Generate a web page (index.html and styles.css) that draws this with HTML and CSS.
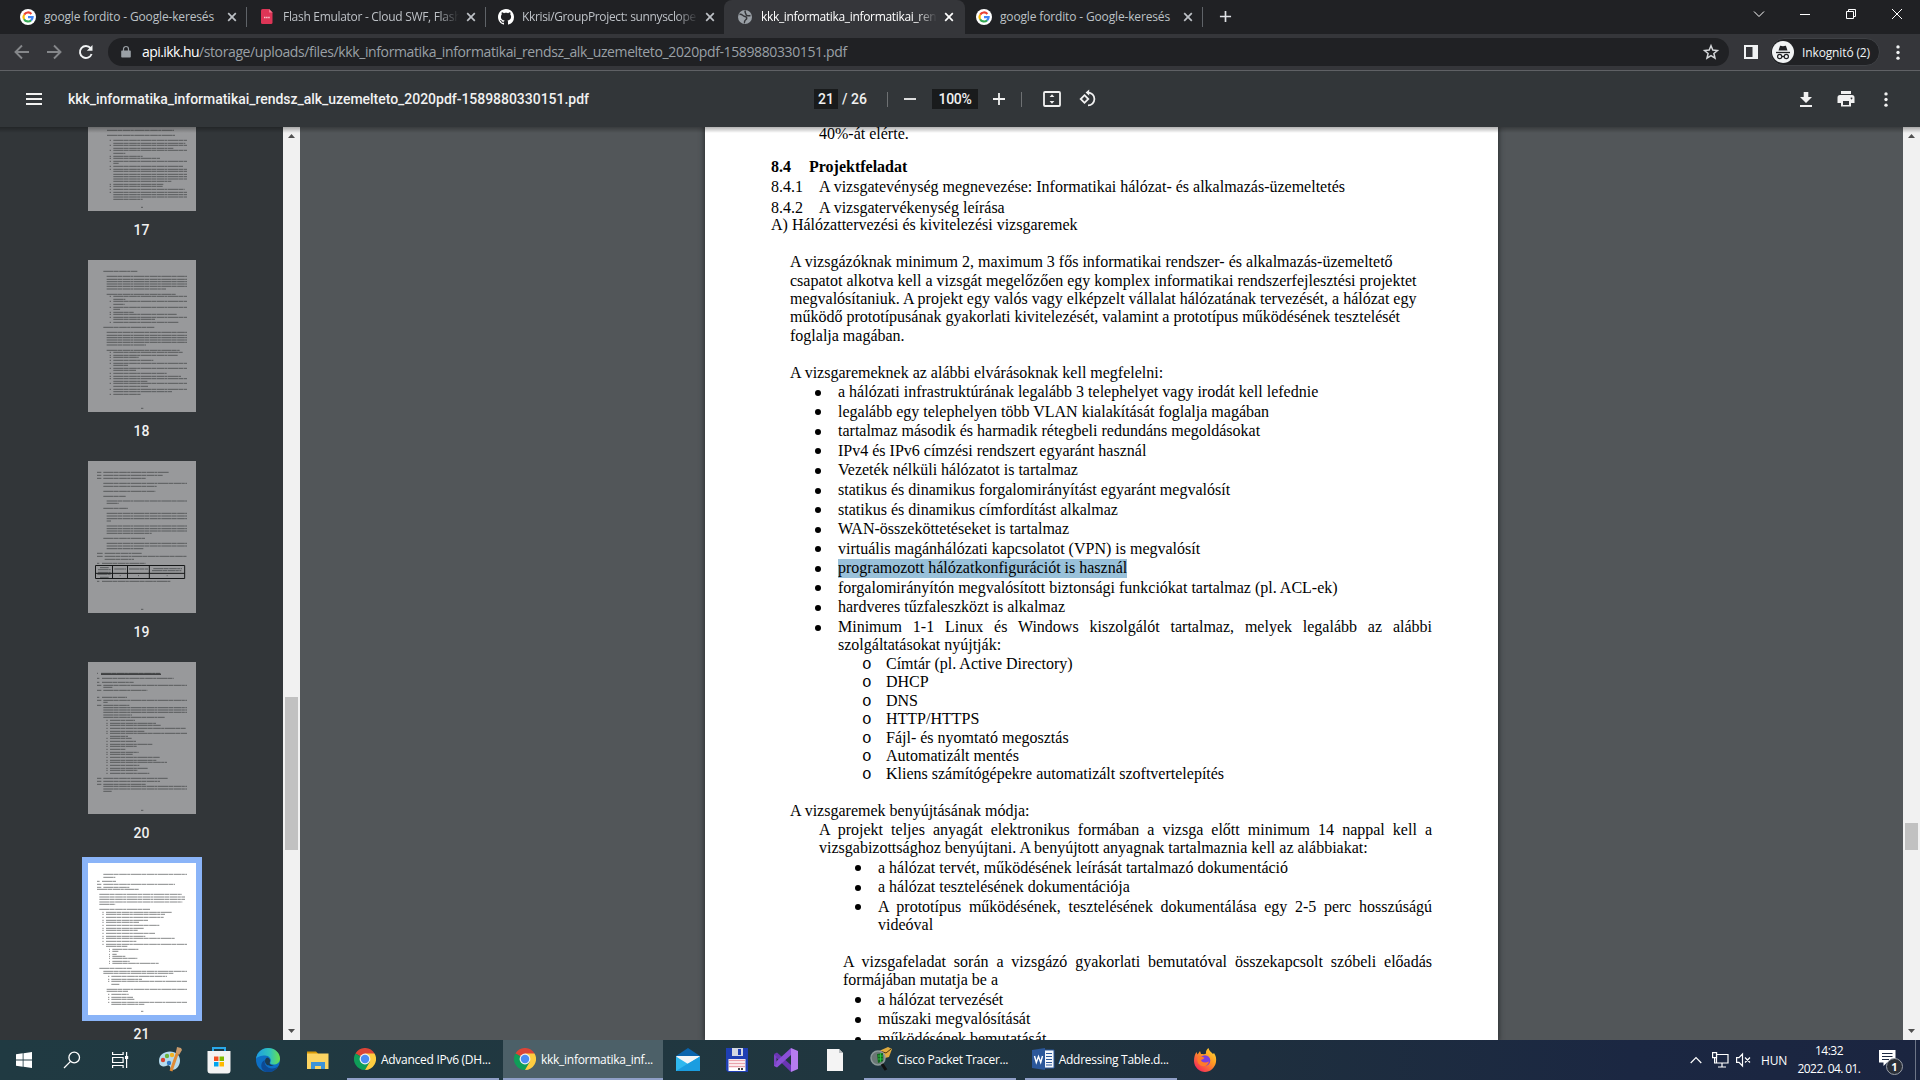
FILE: index.html
```html
<!DOCTYPE html>
<html lang="hu">
<head>
<meta charset="utf-8">
<title>kkk_informatika_informatikai_rendsz_alk_uzemelteto_2020pdf-1589880330151.pdf</title>
<link rel="stylesheet" href="styles.css">
</head>
<body>
<svg class="defs" aria-hidden="true">
  <symbol id="google" viewBox="0 0 16 16"><circle cx="8" cy="8" r="8" fill="#fff"/><g fill="none" stroke-width="2.2"><path d="M4.2 5.6A4.6 4.6 0 0 1 11.4 4.9" stroke="#ea4335"/><path d="M4.1 10.3A4.6 4.6 0 0 1 4.1 5.7" stroke="#fbbc05"/><path d="M11.2 11.3A4.6 4.6 0 0 1 4.1 10.2" stroke="#34a853"/><path d="M8 8.2H12.6A4.6 4.6 0 0 1 11.1 11.4" stroke="#4285f4"/></g></symbol>
  <symbol id="x" viewBox="0 0 10 10"><path d="M1.2 1.2 8.8 8.8M8.8 1.2 1.2 8.8" stroke="currentColor" stroke-width="1.7" fill="none"/></symbol>
  <symbol id="chrome" viewBox="0 0 24 24"><path d="M12 12 1.6 6A12 12 0 0 1 22.4 6z" fill="#db4437"/><path d="M12 12 1.6 6A12 12 0 0 0 12 24L17.2 15z" fill="#0f9d58"/><path d="M12 6H22.4A12 12 0 0 1 12 24L17.2 15z" fill="#ffcd40"/><circle cx="12" cy="12" r="5.9" fill="#f1f1f1"/><circle cx="12" cy="12" r="4.6" fill="#4c8bf5"/></symbol>
  <symbol id="dots" viewBox="0 0 4 16"><g fill="currentColor"><circle cx="2" cy="2" r="1.8"/><circle cx="2" cy="8" r="1.8"/><circle cx="2" cy="14" r="1.8"/></g></symbol>
</svg>

<div class="tabs">
  <div class="tab"><svg class="fav"><use href="#google"/></svg><span class="tt">google fordito - Google-keresés</span><svg class="x"><use href="#x"/></svg></div>
  <div class="tab"><svg class="fav" viewBox="0 0 16 16"><path d="M3.5 0H10l3.500 3.500V13.500A1.500 1.500 0 0 1 12 15H3.500A1.500 1.500 0 0 1 2 13.500V1.500A1.500 1.500 0 0 1 3.500 0z" fill="#dd3556"/><path d="M10 0l3.500 3.500H10z" fill="#f27a90"/><path d="M5 8.500h6" stroke="#f6c4cd" stroke-width="1.500" stroke-dasharray="1.500 .6"/></svg><span class="tt fade">Flash Emulator - Cloud SWF, Flash</span><svg class="x"><use href="#x"/></svg></div>
  <div class="tab nosep"><svg class="fav" viewBox="0 0 16 16"><path fill="#fff" d="M8 0C3.580 0 0 3.580 0 8c0 3.540 2.290 6.530 5.470 7.590.4.070.550-.170.550-.380 0-.190-.010-.820-.010-1.490-2.010.370-2.530-.490-2.690-.940-.090-.230-.480-.940-.820-1.130-.280-.150-.680-.520-.010-.530.630-.010 1.080.580 1.230.820.720 1.210 1.870.870 2.330.660.070-.520.280-.870.510-1.070-1.780-.200-3.640-.890-3.640-3.950 0-.870.310-1.590.820-2.150-.080-.200-.360-1.020.080-2.120 0 0 .670-.210 2.200.820.640-.180 1.320-.270 2-.270s1.360.090 2 .270c1.530-1.040 2.200-.820 2.200-.820.440 1.100.160 1.920.080 2.120.510.560.820 1.270.820 2.150 0 3.070-1.870 3.750-3.650 3.950.290.250.540.730.540 1.480 0 1.070-.010 1.930-.010 2.200 0 .210.150.460.550.380A8.010 8.010 0 0 0 16 8c0-4.420-3.580-8-8-8z"/></svg><span class="tt fade gh">Kkrisi/GroupProject: sunnysclope</span><svg class="x"><use href="#x"/></svg></div>
  <div class="tab active"><svg class="fav" viewBox="0 0 16 16"><circle cx="8" cy="8" r="7" fill="#9aa0a6"/><path d="M2.500 5.500C5 4.500 5.500 7 8 7.500s2 2.500.5 3.500-.5 2.500-1.500 3M8.500 1.500C7 3.500 9 4 9 5.500s3 1.500 4.500 1" fill="none" stroke="#35363a" stroke-width="1.500"/></svg><span class="tt fade kk">kkk_informatika_informatikai_rend</span><svg class="x"><use href="#x"/></svg></div>
  <div class="tab"><svg class="fav"><use href="#google"/></svg><span class="tt">google fordito - Google-keresés</span><svg class="x"><use href="#x"/></svg></div>
  <svg class="plus" viewBox="0 0 14 14"><path d="M7 1v12M1 7h12" stroke="#dfe1e5" stroke-width="1.800"/></svg>
  <div class="win">
    <svg viewBox="0 0 46 28"><path d="M18 11.500l5 5 5-5" /></svg>
    <svg viewBox="0 0 46 28"><path d="M18 14.500h10"/></svg>
    <svg viewBox="0 0 46 28"><path d="M18.500 11.500h7v7h-7zM20.500 11.500v-2h7v7h-2"/></svg>
    <svg viewBox="0 0 46 28"><path d="M18 9l10 10M28 9l-10 10"/></svg>
  </div>
</div>

<div class="nav">
  <svg class="nb dim" viewBox="0 0 16 16"><path d="M15 8H2M8 1.500 1.500 8 8 14.500"/></svg>
  <svg class="nb dim" viewBox="0 0 16 16"><path d="M1 8h13M8 1.500 14.500 8 8 14.500"/></svg>
  <svg class="nb" viewBox="0 0 16 16"><path d="M13.600 10A6 6 0 1 1 12.600 4.200"/><path d="M14.500 1v5.800H8.800z" fill="#f1f3f4" stroke="none"/></svg>
  <div class="omni">
    <svg class="lock" viewBox="0 0 10 12"><path d="M1 4.500h8a.8.8 0 0 1 .8.8v5.400a.8.8 0 0 1-.8.800H1a.8.8 0 0 1-.8-.8V5.300A.8.8 0 0 1 1 4.500z" fill="#9aa0a6"/><path d="M2.500 5V3a2.500 2.500 0 0 1 5 0v2" fill="none" stroke="#9aa0a6" stroke-width="1.200"/></svg>
    <span class="url"><b>api.ikk.hu</b>/storage/uploads/files/kkk_informatika_informatikai_rendsz_alk_uzemelteto_2020pdf-1589880330151.pdf</span>
    <svg class="star" viewBox="0 0 16 16"><path d="M8 1.800l1.800 4.300 4.600.4-3.500 3 1.100 4.600L8 11.600l-4 2.500 1.100-4.600-3.500-3 4.600-.4z" fill="none" stroke="#d5d7da" stroke-width="1.500"/></svg>
  </div>
  <svg class="panel" viewBox="0 0 14 14"><path d="M0 0h14v14H0zM2 2v10h6.500V2z" fill="#f1f3f4" fill-rule="evenodd"/></svg>
  <div class="incog"><svg viewBox="0 0 22 22"><circle cx="11" cy="11" r="11" fill="#f1f3f4"/><path d="M6.500 9.500 8 5c1-.6 1.700.3 3 .3s2-.9 3-.3l1.500 4.500z" fill="#202124"/><path d="M4 11.500h14" stroke="#202124" stroke-width="1.300"/><g fill="none" stroke="#202124" stroke-width="1.200"><circle cx="7.700" cy="15.500" r="2.100"/><circle cx="14.300" cy="15.500" r="2.100"/><path d="M9.800 15.500h2.400"/></g></svg><span>Inkognitó (2)</span></div>
  <svg class="ndots"><use href="#dots"/></svg>
</div>

<div class="pdfbar">
  <svg class="burger" viewBox="0 0 16 12"><path d="M0 1h16M0 6h16M0 11h16" stroke="#f1f1f1" stroke-width="2"/></svg>
  <span class="name">kkk_informatika_informatikai_rendsz_alk_uzemelteto_2020pdf-1589880330151.pdf</span>
  <div class="mid">
    <span class="box pg">21</span><span class="of">/ 26</span><i class="sep s1"></i>
    <svg class="minus" viewBox="0 0 12 12"><path d="M0 6h12"/></svg>
    <span class="box zm">100%</span>
    <svg class="plus2" viewBox="0 0 12 12"><path d="M0 6h12M6 0v12"/></svg><i class="sep s2"></i>
    <svg class="fit" viewBox="0 0 18 16"><rect x="1" y="1" width="16" height="14" rx="1"/><path d="M9 3.200l2.400 2.800H6.600zM9 12.800l2.400-2.800H6.600z" fill="#f1f1f1" stroke="none"/></svg>
    <svg class="rot" viewBox="0 0 18 18"><path d="M5.500 5.200 9.300 9 5.500 12.800 1.700 9z"/><path d="M9 2.600a6.400 6.400 0 1 1 0 12.800"/><path d="M10.200-.5v6.200L6.600 2.600z" fill="#f1f1f1" stroke="none"/></svg>
  </div>
  <div class="acts">
    <svg class="dl" viewBox="0 0 12 15"><path d="M3.700 0h4.600v5H12L6 11 0 5h3.700zM0 13h12v2H0z" fill="#f1f1f1"/></svg>
    <svg class="pr" viewBox="0 0 18 16"><path d="M4 0h10v3H4zM3 4h12a2.500 2.500 0 0 1 2.500 2.500V12H14v3.500H4V12H.5V6.500A2.500 2.500 0 0 1 3 4zm3 6v4h6v-4zm8.500-3.500a.9.900 0 1 0 .01 0z" fill="#f1f1f1" fill-rule="evenodd"/></svg>
    <svg class="pd"><use href="#dots"/></svg>
  </div>
</div>

<main class="viewer">
  <aside class="thumbs">
    <div class="thumb first"><svg viewBox="84 -183 324 456"><path class="ln" d="M141 31H342M141 46H345M160 61H381M160 70H376M160 76H381M160 85H340M160 91H381M160 100H196M160 109H248M160 115H300M160 124H381M160 130H176M160 139H369M160 148H381M160 154H381M160 163H381M160 170H381M160 177H381M160 184H334M160 193H310M160 199H308M160 208H374M160 217H381M160 224H381M160 231H381M160 238H248M243 262H249"/><path class="bl" d="M149 61h4M149 76h4M149 91h4M149 109h4M149 115h4M149 124h4M149 139h4M149 148h4M149 193h4M149 199h4M149 208h4M149 217h4"/></svg><span>17</span></div>
    <div class="thumb"><svg viewBox="84 420 324 456"><path class="ln" d="M130 454H232M140 469H381M140 478H381M140 485H381M140 492H381M140 499H381M140 507H318M140 523H347M160 529H381M160 538H196M160 544H381M160 553H194M160 562H381M160 568H180M160 577H221M160 583H350M160 592H381M160 598H285M160 607H355M130 622H284M140 637H381M140 646H381M140 653H381M140 660H381M140 667H381M140 675H258M140 691H359M160 697H368M160 706H353M160 712H236M160 721H280M160 730H381M160 736H204M160 745H381M160 751H228M160 760H320M160 769H363M160 776H381M160 784H262M160 790H381M160 799H264M160 808H381M160 815H336M160 823H243M243 865H250"/><path class="bl" d="M149 529h4M149 544h4M149 562h4M149 577h4M149 583h4M149 592h4M149 607h4M149 697h4M149 706h4M149 712h4M149 721h4M149 730h4M149 745h4M149 760h4M149 769h4M149 776h4M149 790h4M149 808h4M149 823h4"/></svg><span>18</span></div>
    <div class="thumb"><svg viewBox="84 1023 324 456"><path class="ln" d="M111 1057H124M130 1057H327M111 1066H124M130 1066H308M111 1075H124M130 1075H257M130 1090H381M130 1099H290M130 1114H286M130 1129H197M140 1143H381M140 1150H176M130 1165H204M140 1180H381M140 1188H381M140 1196H381M140 1203H153M140 1218H381M140 1226H381M140 1233H381M140 1240H275M130 1255H255M140 1270H381M140 1278H381M140 1286H250M111 1300H128M134 1300H245M111 1309H128M134 1309H381M134 1318H222M111 1330H118M126 1330H257M111 1384H118M126 1384H331M243 1468H250M120 1343H146M114 1349H152M163 1347H198M207 1347H264M280 1346H366M276 1352H364M112 1363H152M120 1372H146M114 1357H152M179 1367h3M234 1367h3M320 1367h3"/><path d="M106.500 1336.500H374V1375.500H106.500zM106.500 1360H374M157.500 1336V1376M202.500 1336V1376M268 1336V1376" fill="none" stroke="#161819" stroke-width="3"/></svg><span>19</span></div>
    <div class="thumb"><svg viewBox="84 126 324 456"><path class="ln" d="M111 160H114M123 160H300M111 175H118M126 175H341M111 187H118M126 187H221M111 196H124M130 196H381M130 202H157M111 211H124M130 211H262M111 232H118M126 232H201M111 241H124M130 241H381M130 247H143M111 256H124M130 256H208M130 263H381M130 270H381M130 277H381M130 285H216M130 292H314M150 301H225M150 310H288M150 316H302M150 325H377M150 334H253M150 340H381M150 349H204M150 355H215M150 364H228M150 373H277M150 379H230M150 388H197M150 397H236M150 403H218M150 412H299M150 421H289M150 427H321M150 436H238M150 445H264M150 451H233M150 460H268M111 475H124M130 475H323M111 484H124M130 484H300M111 493H124M130 493H257M130 499H381M130 507H381M130 514H155M243 571H250"/><path d="M123 162.500H303" stroke="#111314" stroke-width="3"/><path class="bl" d="M139 301h4M139 310h4M139 316h4M139 325h4M139 334h4M139 340h4M139 355h4M139 364h4M139 373h4M139 379h4M139 388h4M139 397h4M139 403h4M139 412h4M139 421h4M139 427h4M139 436h4M139 445h4M139 451h4M139 460h4"/></svg><span>20</span></div>
    <div class="thumb sel"><svg viewBox="84 729 324 456"><path class="ln" d="M130 763H381M130 772H166M111 784H119M126 784H168M111 793H124M130 793H345M111 802H124M130 802H208M111 808H236M118 823H366M118 831H375M118 838H375M118 846H367M118 853H166M118 868H270M138 877H336M138 883H315M138 892H311M138 901H264M138 907H237M138 916H298M138 925H252M138 931H233M138 940H285M138 949H256M138 955H344M138 964H229M138 973H381M138 979H202M157 988H235M157 994H175M157 1003H170M157 1009H196M157 1015H232M157 1024H209M157 1030H296M118 1045H215M130 1054H381M130 1060H341M154 1069H321M154 1078H246M154 1084H381M154 1093H178M140 1108H381M140 1114H204M154 1123H206M154 1132H219M154 1138H223M154 1147H381M154 1153H253M243 1174H250"/><path class="bl" d="M127 877h4M127 883h4M127 892h4M127 901h4M127 907h4M127 916h4M127 925h4M127 931h4M127 940h4M127 949h4M127 955h4M127 964h4M127 973h4M147 988h3M147 994h3M147 1003h3M147 1009h3M147 1015h3M147 1024h3M147 1030h3M144 1069h4M144 1078h4M144 1084h4M144 1123h4M144 1132h4M144 1138h4M144 1147h4"/></svg><span>21</span></div>
  </aside>
  <div class="sb sb1"><i class="up"></i><i class="th"></i><i class="dn"></i></div>
  <section class="canvas">
    <article class="page">
      <p class="i3 top">40%-át elérte.</p>
      <p class="h"><b class="n">8.4</b><b>Projektfeladat</b></p>
      <p class="h1"><span class="n2">8.4.1</span>A vizsgatevénység megnevezése: Informatikai hálózat- és alkalmazás-üzemeltetés</p>
      <p class="h2"><span class="n2">8.4.2</span>A vizsgatervékenység leírása</p>
      <p class="h3">A) Hálózattervezési és kivitelezési vizsgaremek</p>
      <p class="i1 gap">A vizsgázóknak minimum 2, maximum 3 fős informatikai rendszer- és alkalmazás-üzemeltető<br>csapatot alkotva kell a vizsgát megelőzően egy komplex informatikai rendszerfejlesztési projektet<br>megvalósítaniuk. A projekt egy valós vagy elképzelt vállalat hálózatának tervezését, a hálózat egy<br>működő prototípusának gyakorlati kivitelezését, valamint a prototípus működésének tesztelését<br>foglalja magában.</p>
      <p class="i1 gap">A vizsgaremeknek az alábbi elvárásoknak kell megfelelni:</p>
      <ul class="u1">
        <li>a hálózati infrastruktúrának legalább 3 telephelyet vagy irodát kell lefednie</li>
        <li>legalább egy telephelyen több VLAN kialakítását foglalja magában</li>
        <li>tartalmaz második és harmadik rétegbeli redundáns megoldásokat</li>
        <li>IPv4 és IPv6 címzési rendszert egyaránt használ</li>
        <li>Vezeték nélküli hálózatot is tartalmaz</li>
        <li>statikus és dinamikus forgalomirányítást egyaránt megvalósít</li>
        <li>statikus és dinamikus címfordítást alkalmaz</li>
        <li>WAN-összeköttetéseket is tartalmaz</li>
        <li>virtuális magánhálózati kapcsolatot (VPN) is megvalósít</li>
        <li><mark>programozott hálózatkonfigurációt is használ</mark></li>
        <li>forgalomirányítón megvalósított biztonsági funkciókat tartalmaz (pl. ACL-ek)</li>
        <li>hardveres tűzfaleszközt is alkalmaz</li>
        <li><div class="j">Minimum 1-1 Linux és Windows kiszolgálót tartalmaz, melyek legalább az alábbi szolgáltatásokat nyújtják:</div></li>
      </ul>
      <ul class="u2">
        <li>Címtár (pl. Active Directory)</li>
        <li>DHCP</li>
        <li>DNS</li>
        <li>HTTP/HTTPS</li>
        <li>Fájl- és nyomtató megosztás</li>
        <li>Automatizált mentés</li>
        <li>Kliens számítógépekre automatizált szoftvertelepítés</li>
      </ul>
      <p class="i1 gap">A vizsgaremek benyújtásának módja:</p>
      <p class="i3 j">A projekt teljes anyagát elektronikus formában a vizsga előtt minimum 14 nappal kell a vizsgabizottsághoz benyújtani. A benyújtott anyagnak tartalmaznia kell az alábbiakat:</p>
      <ul class="u3">
        <li>a hálózat tervét, működésének leírását tartalmazó dokumentáció</li>
        <li>a hálózat tesztelésének dokumentációja</li>
        <li><div class="j">A prototípus működésének, tesztelésének dokumentálása egy 2-5 perc hosszúságú videóval</div></li>
      </ul>
      <p class="i4 j gap">A vizsgafeladat során a vizsgázó gyakorlati bemutatóval összekapcsolt szóbeli előadás formájában mutatja be a</p>
      <ul class="u3">
        <li>a hálózat tervezését</li>
        <li>műszaki megvalósítását</li>
        <li>működésének bemutatását</li>
      </ul>
    </article>
  </section>
  <div class="sb sb2"><i class="up"></i><i class="th"></i><i class="dn"></i></div>
  <div class="shade"></div>
</main>

<footer class="task">
  <div class="c48"><svg width="16" height="16" viewBox="0 0 16 16"><path d="M0 2.300 6.700 1.300V7.600H0zM7.500 1.200 16 0V7.600H7.500zM0 8.400H6.700V14.700L0 13.700zM7.500 8.400H16V16L7.500 14.800z" fill="#fff"/></svg></div>
  <div class="c48"><svg width="18" height="18" viewBox="0 0 18 18" fill="none" stroke="#fff" stroke-width="1.300"><circle cx="11.200" cy="6.500" r="5.300"/><path d="M7.500 10.400 1 17"/></svg></div>
  <div class="c48"><svg width="17" height="16" viewBox="0 0 17 16" fill="none" stroke="#fff" stroke-width="1.200"><path d="M.6 0v2.500h10.500V0M.6 16v-2.500h10.500V16M.6 5.500h10.500v5H.6zM14.600 0v16"/><path d="M13 4h3.200v3H13z" fill="#fff" stroke="none"/></svg></div>
  <div class="c49 first49"><svg width="24" height="24" viewBox="0 0 24 24"><path d="M1 13C1 7 6 3.500 12 3.500s10 3.500 10 9-4 10-8 9c-2.500-.7-1-3-3-4s-3 1.500-6 1-4-2.500-4-5.500z" fill="#b5dbee"/><circle cx="5" cy="12" r="2.200" fill="#d9432f"/><circle cx="9" cy="8" r="2.200" fill="#6bb53c"/><circle cx="14" cy="7" r="2.200" fill="#f0b323"/><circle cx="11" cy="15" r="2.200" fill="#2e78c7"/><path d="M20 3 13 23" stroke="#df8c37" stroke-width="3"/><path d="M18 4 19-1l4 1 1 2-3 5z" fill="#c99a6b"/></svg></div>
  <div class="c49"><svg width="24" height="28" viewBox="0 0 24 28"><path d="M6 7V2h12v5" fill="none" stroke="#29a9ea" stroke-width="2"/><path d="M.5 5h23v19.500a3 3 0 0 1-3 3h-17a3 3 0 0 1-3-3z" fill="#f3f3f3"/><path d="M7 10.500h4.500V15H7z" fill="#f25022"/><path d="M12.500 10.500H17V15h-4.500z" fill="#7fba00"/><path d="M7 16h4.500v4.500H7z" fill="#00a4ef"/><path d="M12.500 16H17v4.500h-4.500z" fill="#ffb900"/></svg></div>
  <div class="c49"><svg width="24" height="24" viewBox="0 0 24 24"><defs><linearGradient id="e1"><stop offset="0" stop-color="#1d9de2"/><stop offset=".6" stop-color="#32c4b8"/><stop offset="1" stop-color="#6be04a"/></linearGradient></defs><circle cx="12" cy="12" r="12" fill="#0d6fc4"/><path d="M0 11C1 4 6 0 12 0c7 0 12 5 12 10.500 0 4-3 6-6.500 6-3 0-4-1.200-3-2.500C16 11 13 7.500 9 7.500 5 7.500 1 9 0 11z" fill="url(#e1)"/><path d="M9 12c-1.500 4 2 8.500 7 8.500 3 0 5-1 6-2.500-3 6-9 7-13 5.500C4 21.500 4 14 9 12z" fill="#0d4a94"/><path d="M11 9.500c3 .5 3.500 3 2.800 4.500-.8 2 .5 3.500 4.200 3.300-3.500 1.700-9 .2-9-4 0-1.800.8-3 2-3.800z" fill="#1b3b52"/></svg></div>
  <div class="c49"><svg width="22" height="20" viewBox="0 0 22 20"><path d="M0 1.500h9L11 3.500V6H0z" fill="#d99a06"/><path d="M0 3.500h21.500V19H0z" fill="#fcd462"/><path d="M4 19v-7h14v7h-4v-3H8v3z" fill="#3d93d8"/></svg></div>
  <div class="app a1"><svg width="22" height="22"><use href="#chrome"/></svg><span>Advanced IPv6 (DH...</span></div>
  <div class="app on"><svg width="22" height="22"><use href="#chrome"/></svg><span>kkk_informatika_inf...</span></div>
  <div class="c49"><svg width="24" height="24" viewBox="0 0 24 24"><path d="M0 8 12 0l12 8v4H0z" fill="#0a64ad"/><path d="M0 8h24l-5 8H5z" fill="#f2f5f7"/><path d="M0 8.500 12 16l12-7.500V23H0z" fill="#2fb8ee"/><path d="M0 23 12 15.500 24 8.500V23z" fill="#1a9de0"/></svg></div>
  <div class="c49"><svg width="22" height="24" viewBox="0 0 22 24"><path d="M0 0h22v24H2l-2-2z" fill="#1f3fb4"/><path d="M6 0h11v8H6z" fill="#d4d8e2"/><path d="M12 1h3v6h-3z" fill="#1f3fb4"/><path d="M2.500 11h17v12h-17z" fill="#fff"/><path d="M3 12.500h16M3 15.500h16M3 18.500h16" stroke="#e9a2ab" stroke-width="1.400"/><path d="M12 21h6" stroke="#444" stroke-width="2" stroke-dasharray="2 1"/></svg></div>
  <div class="c49"><svg width="24" height="24" viewBox="0 0 24 24"><path d="M17 0 24 3V21L17 24z" fill="#b67cf0"/><path d="M0 6l3-1.500L17 17v7L1.500 9z" fill="#6a35b3"/><path d="M0 18l3 1.500L17 7V0L0 15.500z" fill="#8a4fd6"/><path d="M0 6.500V18l2.500-2V8.500z" fill="#7d44c6"/></svg></div>
  <div class="c49"><svg width="16" height="22" viewBox="0 0 16 22"><path d="M0 0h12l4 4v18H0z" fill="#f4f4f4"/><path d="M12 0v4h4z" fill="#b9bdc0"/></svg></div>
  <div class="app a3"><svg width="22" height="24" viewBox="0 0 22 24"><path d="M9 4 18 0l4 2-3 8-8 2z" fill="#e0ac3f"/><path d="M10 4l6 2 5-4" fill="none" stroke="#4d3610"/><circle cx="8" cy="11" r="7" fill="#6a7775" stroke="#8d9a9a" stroke-width="1.500"/><path d="M7 7l6-1v8l-5 2z" fill="#12691d"/><path d="M8 9h5M8 12h5M10.500 6v9" stroke="#2fd044" stroke-width=".8"/><path d="M12 17l4 6" stroke="#111" stroke-width="3"/></svg><span>Cisco Packet Tracer...</span></div>
  <div class="app a4"><svg width="22" height="22" viewBox="0 0 22 22"><path d="M10 2h12v18H10z" fill="#f4f7fb" stroke="#2b579a"/><path d="M14 5.500h6M14 8.500h6M14 11.500h6M14 14.500h6M14 17h6" stroke="#2b579a"/><path d="M0 2 13 0v22L0 20z" fill="#2b579a"/><path d="M2.500 8 4.300 14.500 6.500 8.500 8.700 14.500 10.500 8" fill="none" stroke="#fff" stroke-width="1.400"/></svg><span>Addressing Table.d...</span></div>
  <div class="c49 ff"><svg width="24" height="24" viewBox="0 0 24 24"><defs><linearGradient id="f1" x1="1" y1="0" x2=".2" y2="1"><stop offset="0" stop-color="#ffe03a"/><stop offset=".45" stop-color="#ff9a22"/><stop offset="1" stop-color="#f5225c"/></linearGradient></defs><path d="M1 13c0-4 1-7 2.500-9l1 2.500L7 3l1 3c2 0 4 .5 5-.5C12.500 3 14 1 15.500 0c.5 3 3 4 4.500 6l1-1c2 3 2.500 5.500 2 9-1 6-6 10-11 10S1 19.500 1 13z" fill="url(#f1)"/><circle cx="12" cy="12.500" r="5.300" fill="#7a3fe0"/><path d="M5 9c2-1 4 0 6 .5 1 1-1.500 2-3 2.500 1 3 5 3 8 1.500-1 4-4 5.500-7 4.500-4-1.300-5.500-5-4-9z" fill="#ff7a2a"/></svg></div>
  <div class="tray">
    <svg class="t1" viewBox="0 0 12 8"><path d="M.7 7 6 1.500 11.300 7"/></svg>
    <svg class="t2" viewBox="0 0 17 16"><path d="M4.500 2.500H16v8.500H4.500zM10 11v4M6 15h8M.6.6h4v5h-4zM2.600 5.600V11H5"/></svg>
    <svg class="t3" viewBox="0 0 15 14"><path d="M.6 4.600H3L6.500 1v12L3 9.400H.6zM9 4.500l5 5M14 4.500l-5 5"/></svg>
    <span class="lang">HUN</span>
    <div class="clock"><span>14:32</span><span class="date">2022. 04. 01.</span></div>
    <div class="note"><svg width="17" height="17" viewBox="0 0 17 17"><path d="M0 0h16.500v12.500H8L4.500 16v-3.500H0z" fill="#fff"/><path d="M3 3.500h10.500M3 6.500h10.500M3 9.500h7" stroke="#1d2a42" stroke-width="1.200"/></svg><b>1</b></div>
    <i class="desk"></i>
  </div>
</footer>
</body>
</html>
```
FILE: styles.css
```css
*{box-sizing:border-box}
body{margin:0;width:1920px;height:1080px;overflow:hidden;display:flex;flex-direction:column;background:#525659;font-family:"Open Sans","Noto Sans",sans-serif}
svg{display:block;flex:none;overflow:visible}
.defs{position:absolute;width:0;height:0}

/* tab strip */
.tabs{height:34px;background:#202124;display:flex;padding-left:8px;flex:none}
.tab{width:239px;height:34px;display:flex;align-items:center;padding:0 0 0 12px;color:#bdc1c6;font-size:12px;background:linear-gradient(#5f6368,#5f6368) right 7px/1px 20px no-repeat}
.tab.nosep{background:none}
.tab.active{background:#35363a;color:#fff;border-radius:8px 8px 0 0;width:241px;margin:0 -1px}
.tab.active .fav{margin-left:1px}
.fav{width:16px;height:16px}
.tt{margin-left:8px;width:176px;letter-spacing:-.15px;white-space:nowrap;overflow:hidden;line-height:18px}
.fade{letter-spacing:-.3px;-webkit-mask-image:linear-gradient(90deg,#000 88%,transparent);mask-image:linear-gradient(90deg,#000 88%,transparent)}
.gh{letter-spacing:-.36px}
.kk{letter-spacing:-.33px}
.x{width:10px;height:10px;margin-left:7px}
.plus{width:13px;height:13px;margin:10px 0 0 16px}
.win{margin-left:auto;display:flex}
.win svg{width:46px;height:28px;fill:none;stroke:#fff;stroke-width:1}

/* address row */
.nav{height:37px;background:#35363a;border-bottom:1px solid #5f6165;display:flex;align-items:center;padding:0 0 0 14px;flex:none}
.nb{width:16px;height:16px;margin-right:16px;fill:none;stroke:#f1f3f4;stroke-width:1.9}
.nb.dim{stroke:#85878a}
.omni{width:1621px;height:28px;border-radius:14px;background:#202124;margin-left:-2px;display:flex;align-items:center;padding-left:13px}
.lock{width:10px;height:12px}
.url{margin-left:11px;font-size:14px;letter-spacing:-.38px;color:#9aa0a6;white-space:nowrap;line-height:20px}
.url b{font-weight:400;color:#fff;letter-spacing:-.57px}
.star{width:16px;height:16px;margin:0 10px 0 auto}
.panel{width:14px;height:14px;margin-left:15px}
.incog{width:110px;height:28px;margin-left:12px;border-radius:14px;background:#202124;border:1px solid #3f4145;display:flex;align-items:center;padding-left:1px;font-size:12px;color:#f1f3f4;letter-spacing:-.13px;white-space:nowrap}
.incog svg{width:22px;height:22px}
.incog span{margin-left:8px}
.ndots{width:4px;height:15px;margin-left:16px;color:#f1f3f4}

/* document toolbar */
.pdfbar{height:56px;background:#323639;display:flex;align-items:center;padding-left:26px;color:#f1f1f1;font:500 14px/20px Roboto,sans-serif;flex:none}
.burger{width:16px;height:12px}
.name{margin-left:26px;width:746px;letter-spacing:-.03px;white-space:nowrap}
.mid{display:flex;align-items:center}
.box{background:#191b1c;height:20px;text-align:center}
.pg{width:24px}
.of{margin-left:4px;width:45px;white-space:nowrap}
.zm{width:46px;margin-left:16px;letter-spacing:-.3px}
.sep{width:1px;height:15px;background:#6e7173}
.minus,.plus2{width:12px;height:12px;stroke:#f1f1f1;stroke-width:1.8}
.minus{margin-left:16px}
.plus2{margin-left:15px}
.s2{margin-left:16px}
.fit{width:18px;height:16px;margin-left:21px;fill:none;stroke:#f1f1f1;stroke-width:1.8}
.rot{width:18px;height:18px;margin-left:18px;fill:none;stroke:#f1f1f1;stroke-width:1.8}
.acts{margin-left:auto;display:flex;align-items:center;padding-right:32px}
.dl{width:12px;height:15px}
.pr{width:18px;height:16px;margin-left:25px}
.pd{width:4px;height:15px;margin-left:29px}

/* viewer */
.viewer{height:913px;display:flex;position:relative;overflow:hidden;flex:none}
.shade{position:absolute;left:0;right:0;top:0;height:6px;background:linear-gradient(rgba(0,0,0,.3),transparent)}
.thumbs{width:283px;background:#323639;overflow:hidden;height:913px}
.thumb{display:flex;flex-direction:column;align-items:center;height:201px;color:#f1f1f1;font:500 14px/20px Roboto,sans-serif}
.thumb.first{margin-top:-68px}
.thumb svg{width:108px;height:152px;background:#98999b}
.thumb span{margin-top:9px}
.thumb.sel svg{background:#fff;box-shadow:0 0 0 6px #8ab4f8}
.ln{fill:none;stroke:#26292b;stroke-opacity:.55;stroke-width:3;stroke-dasharray:31 1 14 1.5 23 1 9 1.5}
.bl{stroke:#222;stroke-opacity:.6;stroke-width:2.6}
.sb{background:#f1f1f1;width:17px;display:flex;flex-direction:column;align-items:center;height:913px;flex:none}
.up,.dn{width:7px;height:4px;background:#505050;clip-path:polygon(50% 0,100% 100%,0 100%)}
.up{margin-top:7px}
.dn{clip-path:polygon(0 0,100% 0,50% 100%);margin:auto 0 7px}
.th{width:13px;background:#c1c1c1}
.sb1 .th{height:153px;margin-top:559px}
.sb2 .th{height:27px;margin-top:685px}
.canvas{width:1603px;padding-left:405px}
.page{width:793px;height:913px;overflow:hidden;background:#fff;padding:0 66px;color:#000;font:16px/18.4px "Liberation Serif",serif;box-shadow:0 0 5px 1px #2c2f31}
.page p,.page ul{margin:0;padding:0;list-style:none}
.page p{white-space:nowrap}
.page .top{margin-top:-2.4px}
.page .h{margin-top:14.6px}
.page .h1{margin-top:2px}
.page .h2{margin-top:2.1px}
.page .h3{margin-top:-.6px}
.page .gap{margin-top:18.4px}
.n{display:inline-block;width:38px}
.n2{display:inline-block;width:48px}
.page .i1{margin-left:19px}
.page .i3{margin-left:48px}
.page .i4{margin-left:72px}
.page .j{text-align:justify;white-space:normal;flex:1}
.page li{display:flex;white-space:nowrap}
.u1 li,.u3 li{padding-top:1.18px}
.u1 li::before,.u3 li::before{content:"";flex:none;width:6px;height:6px;border-radius:50%;background:#000;margin:6.5px 17px 0 44px}
.u3 li::before{margin:6.5px 17px 0 84px}
.u2 li::before{content:"o";flex:none;width:24px;margin-left:91px;font-family:"Liberation Mono",monospace;line-height:20.4px;height:18.4px}
mark{background:#99c1da;color:#000}

/* taskbar */
.task{height:40px;display:flex;background:linear-gradient(90deg,#203a42,#20363f 45%,#1e2f3e 65%,#1b2742 85%,#1b2540);color:#fff;font-size:12px;flex:none}
.c48,.c49{display:flex;align-items:center;justify-content:center;width:48px;flex:none}
.c49{width:49.2px}
.first49{margin-left:1.5px}
.app{width:152px;display:flex;align-items:center;padding-left:7px;border-bottom:2px solid #8f9fc7;margin-left:4px;flex:none;white-space:nowrap;letter-spacing:-.27px}
.app span{margin-left:5px}
.app.a1{margin-left:4.7px}
.app.on{background:#4c6068;width:160px;padding-left:11px}
.app.a3{margin-left:4px;padding-left:6px}
.app.a4{margin-left:9px}
.ff{margin-left:4px}
.tray{margin-left:auto;display:flex;align-items:center}
.tray svg{fill:none;stroke:#fff;stroke-width:1.2}
.t1{width:12px;height:8px}
.t2{width:17px;height:16px;margin-left:10px}
.t3{width:15px;height:14px;margin-left:7px}
.lang{margin-left:10px;width:36px;letter-spacing:-.2px}
.clock{width:64px;display:flex;flex-direction:column;align-items:center;line-height:18px;white-space:nowrap;letter-spacing:-.5px}
.date{letter-spacing:-.6px}
.note{margin-left:18px;position:relative;width:36px}
.note svg{stroke:none;margin-top:-3px}
.note b{position:absolute;left:7px;top:5px;width:17px;height:17px;border-radius:50%;background:#2a2f38;border:1px solid #9a9fa8;font-size:11px;line-height:15px;text-align:center}
.desk{width:1px;height:40px;background:#6d7587;margin-right:4px}
```
